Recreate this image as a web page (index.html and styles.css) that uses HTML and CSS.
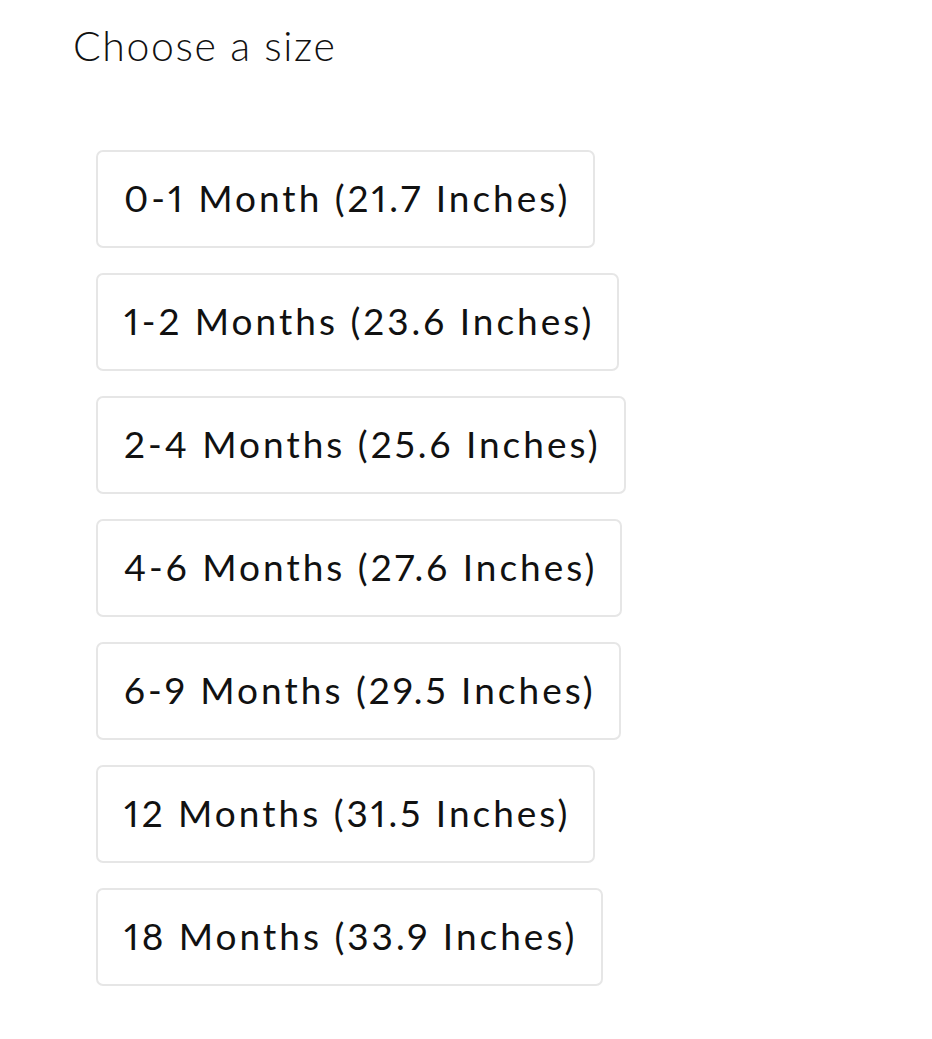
FILE: index.html
```html
<!DOCTYPE html>
<html>
<head>
<meta charset="utf-8">
<link rel="stylesheet" href="styles.css">
</head>
<body>
<div class="page">
  <h2 class="title">Choose a size</h2>
  <div class="options">
    <button class="opt">0-1 Month (21.7 Inches)</button>
    <button class="opt">1-2 Months (23.6 Inches)</button>
    <button class="opt">2-4 Months (25.6 Inches)</button>
    <button class="opt">4-6 Months (27.6 Inches)</button>
    <button class="opt">6-9 Months (29.5 Inches)</button>
    <button class="opt">12 Months (31.5 Inches)</button>
    <button class="opt">18 Months (33.9 Inches)</button>
  </div>
</div>
</body>
</html>
```
FILE: styles.css
```css
html, body {
  margin: 0;
  padding: 0;
  background: #ffffff;
}
.page {
  padding: 21px 0 0 73px;
  font-family: Lato, "Liberation Sans", sans-serif;
  color: #111111;
}
.title {
  margin: 0;
  font-size: 41px;
  font-weight: 300;
  letter-spacing: 1.6px;
  line-height: 50px;
  color: #111111;
}
.options {
  display: flex;
  flex-direction: column;
  align-items: flex-start;
  gap: 25px;
  margin: 79px 0 0 23px;
}
.opt {
  font-family: Lato, "Liberation Sans", sans-serif;
  font-size: 37px;
  font-weight: 400;
  letter-spacing: 3px;
  font-variant-numeric: proportional-nums;
  color: #111111;
  background: #ffffff;
  border: 2px solid #e6e6e6;
  border-radius: 7px;
  height: 98px;
  padding: 0 23px 3px 26px;
  margin: 0;
}
```
